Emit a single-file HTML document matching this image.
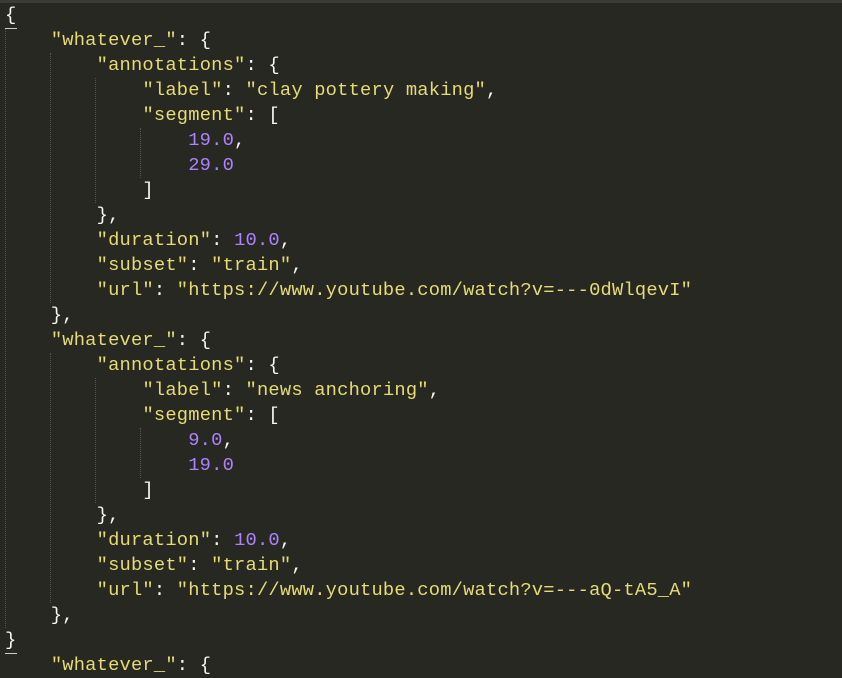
<!DOCTYPE html>
<html><head><style>
html,body{margin:0;padding:0;background:#272822;width:842px;height:659px;overflow:hidden}
.top{position:absolute;left:0;top:0;width:842px;height:3px;background:#3b3c37}
pre{position:absolute;left:5px;top:3px;margin:0;font-family:"Liberation Mono",monospace;font-size:18.75px;letter-spacing:0.2px;line-height:25px;color:#F8F8F2}
.s{color:#E6DB74}.n{color:#AE81FF}
.g{position:absolute;width:0;border-left:1px dotted #555650}
.u{position:absolute;left:5px;width:12px;height:1px;background:#ccc}
</style></head><body>
<div class="top"></div>
<div class="g" style="left:5px;top:28px;height:600px"></div>
<div class="g" style="left:50px;top:53px;height:250px"></div>
<div class="g" style="left:50px;top:353px;height:250px"></div>
<div class="g" style="left:95px;top:78px;height:125px"></div>
<div class="g" style="left:95px;top:378px;height:125px"></div>
<div class="g" style="left:140px;top:128px;height:50px"></div>
<div class="g" style="left:140px;top:428px;height:50px"></div>
<div class="u" style="top:28px"></div>
<div class="u" style="top:653px"></div>
<pre>{
    <span class="s">"whatever_"</span>: {
        <span class="s">"annotations"</span>: {
            <span class="s">"label"</span>: <span class="s">"clay pottery making"</span>,
            <span class="s">"segment"</span>: [
                <span class="n">19.0</span>,
                <span class="n">29.0</span>
            ]
        },
        <span class="s">"duration"</span>: <span class="n">10.0</span>,
        <span class="s">"subset"</span>: <span class="s">"train"</span>,
        <span class="s">"url"</span>: <span class="s">"https://www.youtube.com/watch?v=---0dWlqevI"</span>
    },
    <span class="s">"whatever_"</span>: {
        <span class="s">"annotations"</span>: {
            <span class="s">"label"</span>: <span class="s">"news anchoring"</span>,
            <span class="s">"segment"</span>: [
                <span class="n">9.0</span>,
                <span class="n">19.0</span>
            ]
        },
        <span class="s">"duration"</span>: <span class="n">10.0</span>,
        <span class="s">"subset"</span>: <span class="s">"train"</span>,
        <span class="s">"url"</span>: <span class="s">"https://www.youtube.com/watch?v=---aQ-tA5_A"</span>
    },
}
    <span class="s">"whatever_"</span>: {
</pre>
</body></html>
